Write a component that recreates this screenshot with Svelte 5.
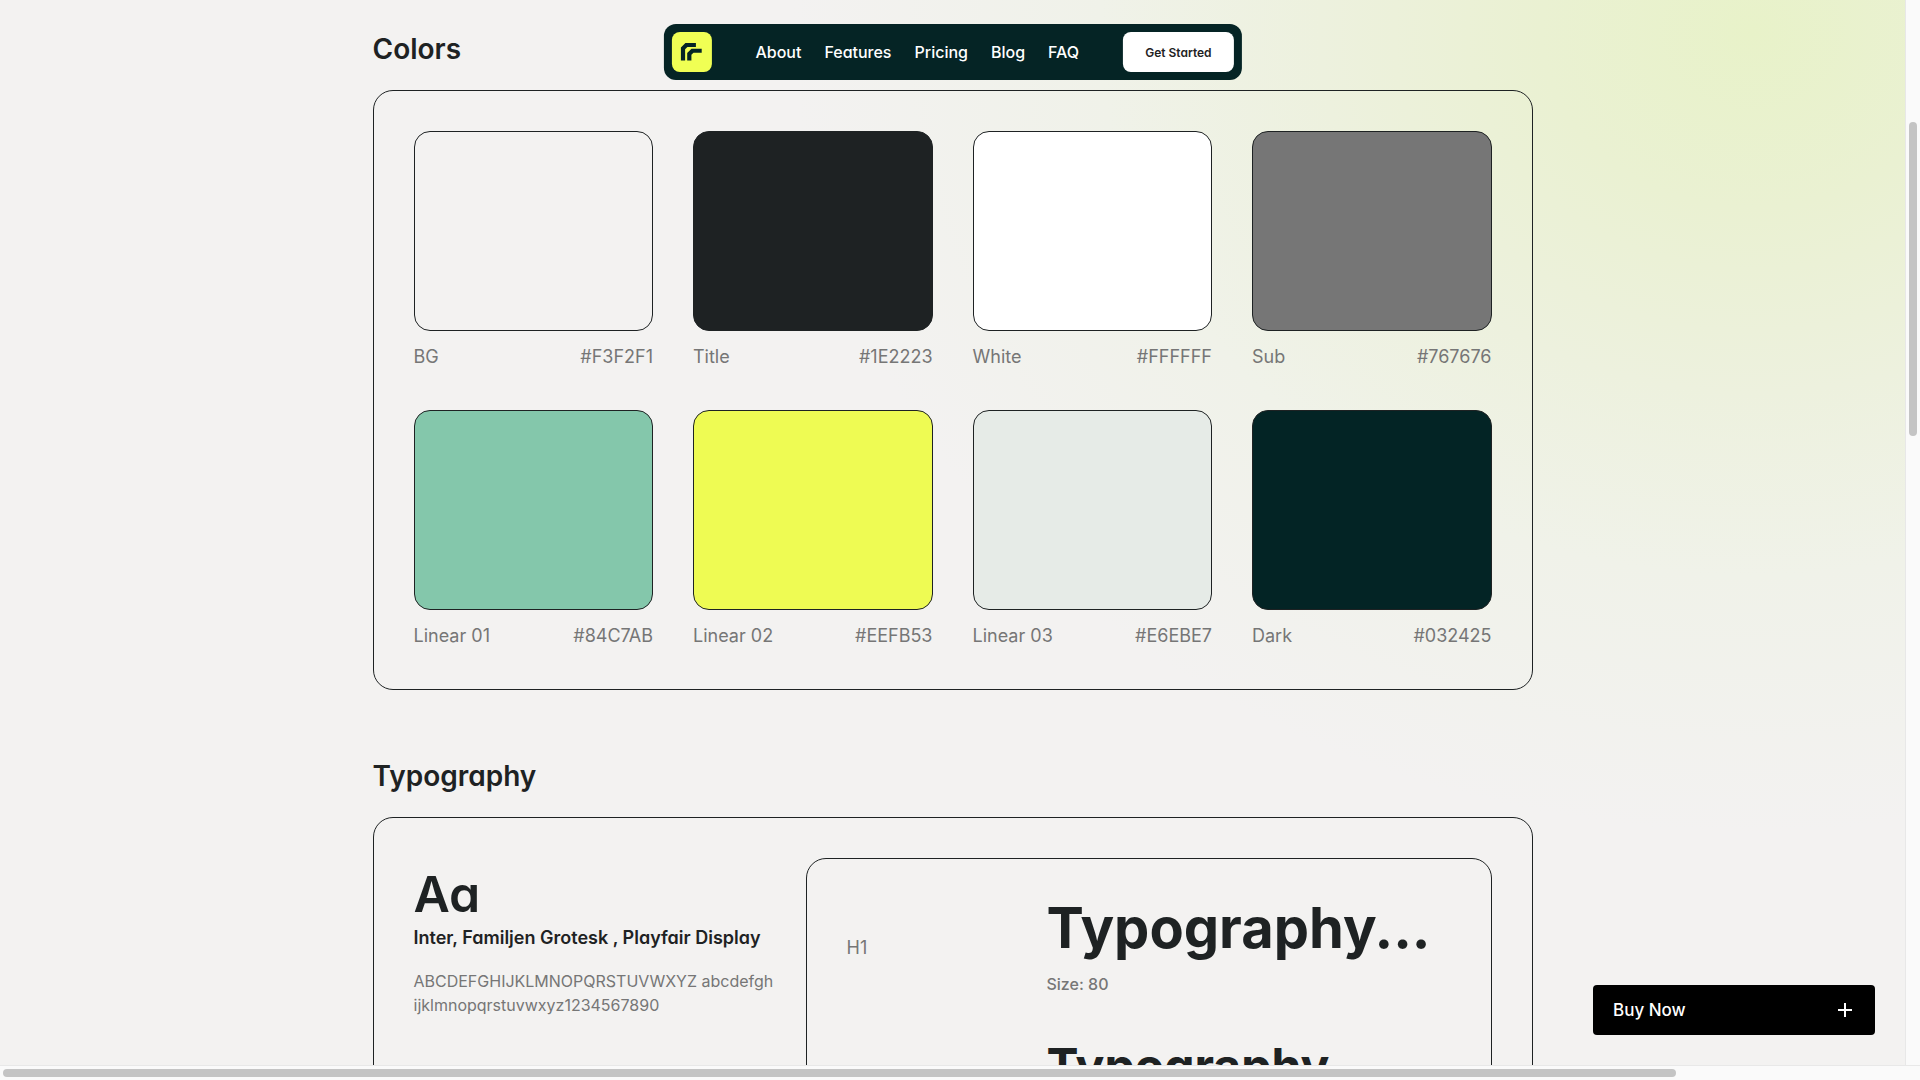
<script>
  const links = ["About", "Features", "Pricing", "Blog", "FAQ"];

  const colors = [
    { name: "BG", hex: "#F3F2F1" },
    { name: "Title", hex: "#1E2223" },
    { name: "White", hex: "#FFFFFF" },
    { name: "Sub", hex: "#767676" },
    { name: "Linear 01", hex: "#84C7AB" },
    { name: "Linear 02", hex: "#EEFB53" },
    { name: "Linear 03", hex: "#E6EBE7" },
    { name: "Dark", hex: "#032425" },
  ];
</script>

<div class="window">
  <div class="page">
    <header class="navbar">
      <a class="logo" href="/" aria-label="Home">
        <svg viewBox="0 0 40 40" width="40" height="40">
          <path d="M9 28.400V15.500L13.500 11H24V15H15.500L13.200 17.300V28.400Z" />
          <path d="M15.300 28.400V21L19.600 16.700H29.800V20.700H21.600L19.500 22.800V28.400Z" />
        </svg>
      </a>
      <nav>
        {#each links as link}
          <a href="#{link.toLowerCase()}">{link}</a>
        {/each}
      </nav>
      <button class="start">Get Started</button>
    </header>

    <main>
      <section>
        <h2>Colors</h2>
        <div class="panel swatches">
          {#each colors as color}
            <div>
              <div class="swatch" style="background-color: {color.hex}"></div>
              <div class="caption">
                <span>{color.name}</span>
                <span>{color.hex}</span>
              </div>
            </div>
          {/each}
        </div>
      </section>

      <section>
        <h2>Typography</h2>
        <div class="panel type">
          <div class="family">
            <p class="specimen">Aa</p>
            <h3>Inter, Familjen Grotesk , Playfair Display</h3>
            <p class="alphabet">
              ABCDEFGHIJKLMNOPQRSTUVWXYZ abcdefgh<br />ijklmnopqrstuvwxyz1234567890
            </p>
          </div>
          <div class="panel sizes">
            <div class="size-row">
              <span class="tag">H1</span>
              <div>
                <p class="sample h1">Typography...</p>
                <p class="size">Size: 80</p>
              </div>
            </div>
            <div class="size-row">
              <div class="second">
                <p class="sample h2">Typography</p>
              </div>
            </div>
          </div>
        </div>
      </section>
    </main>

    <button class="buy">
      Buy Now
      <svg viewBox="0 0 14 14" width="14" height="14">
        <path d="M7 0V14M0 7H14" />
      </svg>
    </button>
  </div>

  <div class="track vertical"><div class="thumb"></div></div>
  <div class="track horizontal"><div class="thumb"></div></div>
</div>

<style>
  :global(body) {
    margin: 0;
    overflow: hidden;
  }

  .window {
    display: grid;
    grid-template-columns: minmax(0, 1fr) 15px;
    grid-template-rows: minmax(0, 1fr) 15px;
    height: 100vh;
    font-family: Inter, "Liberation Sans", sans-serif;
    color: #1e2223;
  }

  .page {
    position: relative;
    overflow: hidden;
    background:
      radial-gradient(
        ellipse 960px 800px at 92% 3%,
        #e8f2c9 0%,
        #eaf1d2 22%,
        #edf1de 45%,
        #f0f2e9 68%,
        rgba(243, 242, 241, 0) 100%
      ),
      #f3f2f1;
  }

  h2,
  h3,
  p {
    margin: 0;
  }

  a {
    text-decoration: none;
  }

  button {
    border: none;
    font-family: inherit;
    cursor: pointer;
  }

  /* single-storey a */
  nav a,
  .start,
  h2,
  h3,
  .specimen {
    font-feature-settings: "cv11";
  }

  .navbar {
    position: absolute;
    top: 24px;
    left: 50%;
    transform: translateX(-50%);
    z-index: 10;
    display: flex;
    align-items: center;
    gap: 44px;
    padding: 8px;
    border-radius: 12px;
    background-color: #052425;
  }

  .logo {
    display: flex;
    border-radius: 8px;
    background-color: #f0ff54;
  }

  .logo svg {
    fill: #032425;
  }

  nav {
    display: flex;
    gap: 23px;
  }

  nav a {
    color: #fff;
    font-size: 16px;
    font-weight: 500;
    line-height: 24px;
  }

  .start {
    height: 40px;
    padding: 0 22px;
    border-radius: 8px;
    background-color: #fff;
    color: #1e2223;
    font-size: 12px;
    font-weight: 600;
  }

  main {
    width: 1160px;
    max-width: 100%;
    margin: 0 auto;
  }

  section {
    padding-top: 27px;
  }

  section + section {
    padding-top: 64px;
  }

  h2 {
    margin-bottom: 18px;
    font-size: 28px;
    font-weight: 600;
    line-height: 45px;
  }

  .panel {
    box-sizing: border-box;
    padding: 40px;
    border: 1px solid #1e2223;
    border-radius: 20px;
  }

  .swatches {
    display: grid;
    grid-template-columns: repeat(4, 1fr);
    gap: 40px;
  }

  .swatch {
    box-sizing: border-box;
    height: 200px;
    border: 1px solid #1e2223;
    border-radius: 16px;
  }

  .caption {
    display: flex;
    justify-content: space-between;
    margin-top: 12px;
    color: #767676;
    font-size: 18px;
    line-height: 27px;
  }

  .type {
    display: grid;
    grid-template-columns: 360px 1fr;
    gap: 32px;
  }

  .specimen {
    padding: 8px 0 2px;
    font-size: 50px;
    font-weight: 600;
    line-height: 56px;
  }

  h3 {
    margin-bottom: 18px;
    font-size: 18px;
    font-weight: 600;
    line-height: 27px;
    white-space: nowrap;
  }

  .alphabet {
    color: #767676;
    font-size: 16px;
    line-height: 24px;
    white-space: nowrap;
  }

  .size-row {
    display: grid;
    grid-template-columns: 200px 1fr;
    align-items: center;
    margin-bottom: 40px;
  }

  .second {
    grid-column: 2;
  }

  .tag {
    color: #767676;
    font-size: 18px;
  }

  .sample {
    font-weight: 700;
    white-space: nowrap;
  }

  .h1 {
    font-size: 56px;
    line-height: 58px;
  }

  .h2 {
    font-size: 48px;
    line-height: 62px;
  }

  .size {
    margin-top: 16px;
    color: #767676;
    font-size: 16px;
    font-weight: 500;
    line-height: 22px;
  }

  .buy {
    position: absolute;
    right: 30px;
    bottom: 30px;
    display: flex;
    align-items: center;
    justify-content: space-between;
    width: 282px;
    height: 50px;
    padding: 0 23px 0 20px;
    border-radius: 4px;
    background-color: #000;
    color: #fff;
    font-size: 17px;
    font-weight: 500;
  }

  .buy svg {
    fill: none;
    stroke: #fff;
    stroke-width: 2;
  }

  .track {
    box-sizing: border-box;
    background-color: #fafafa;
  }

  .vertical {
    padding: 122px 3px 0;
    border-left: 1px solid #e8e8e8;
  }

  .horizontal {
    grid-column: 1 / -1;
    padding: 3px;
    border-top: 1px solid #e8e8e8;
  }

  .thumb {
    border-radius: 4px;
    background-color: #c4c4c4;
  }

  .vertical .thumb {
    width: 8px;
    height: 314px;
  }

  .horizontal .thumb {
    width: 1673px;
    height: 8px;
  }
</style>
